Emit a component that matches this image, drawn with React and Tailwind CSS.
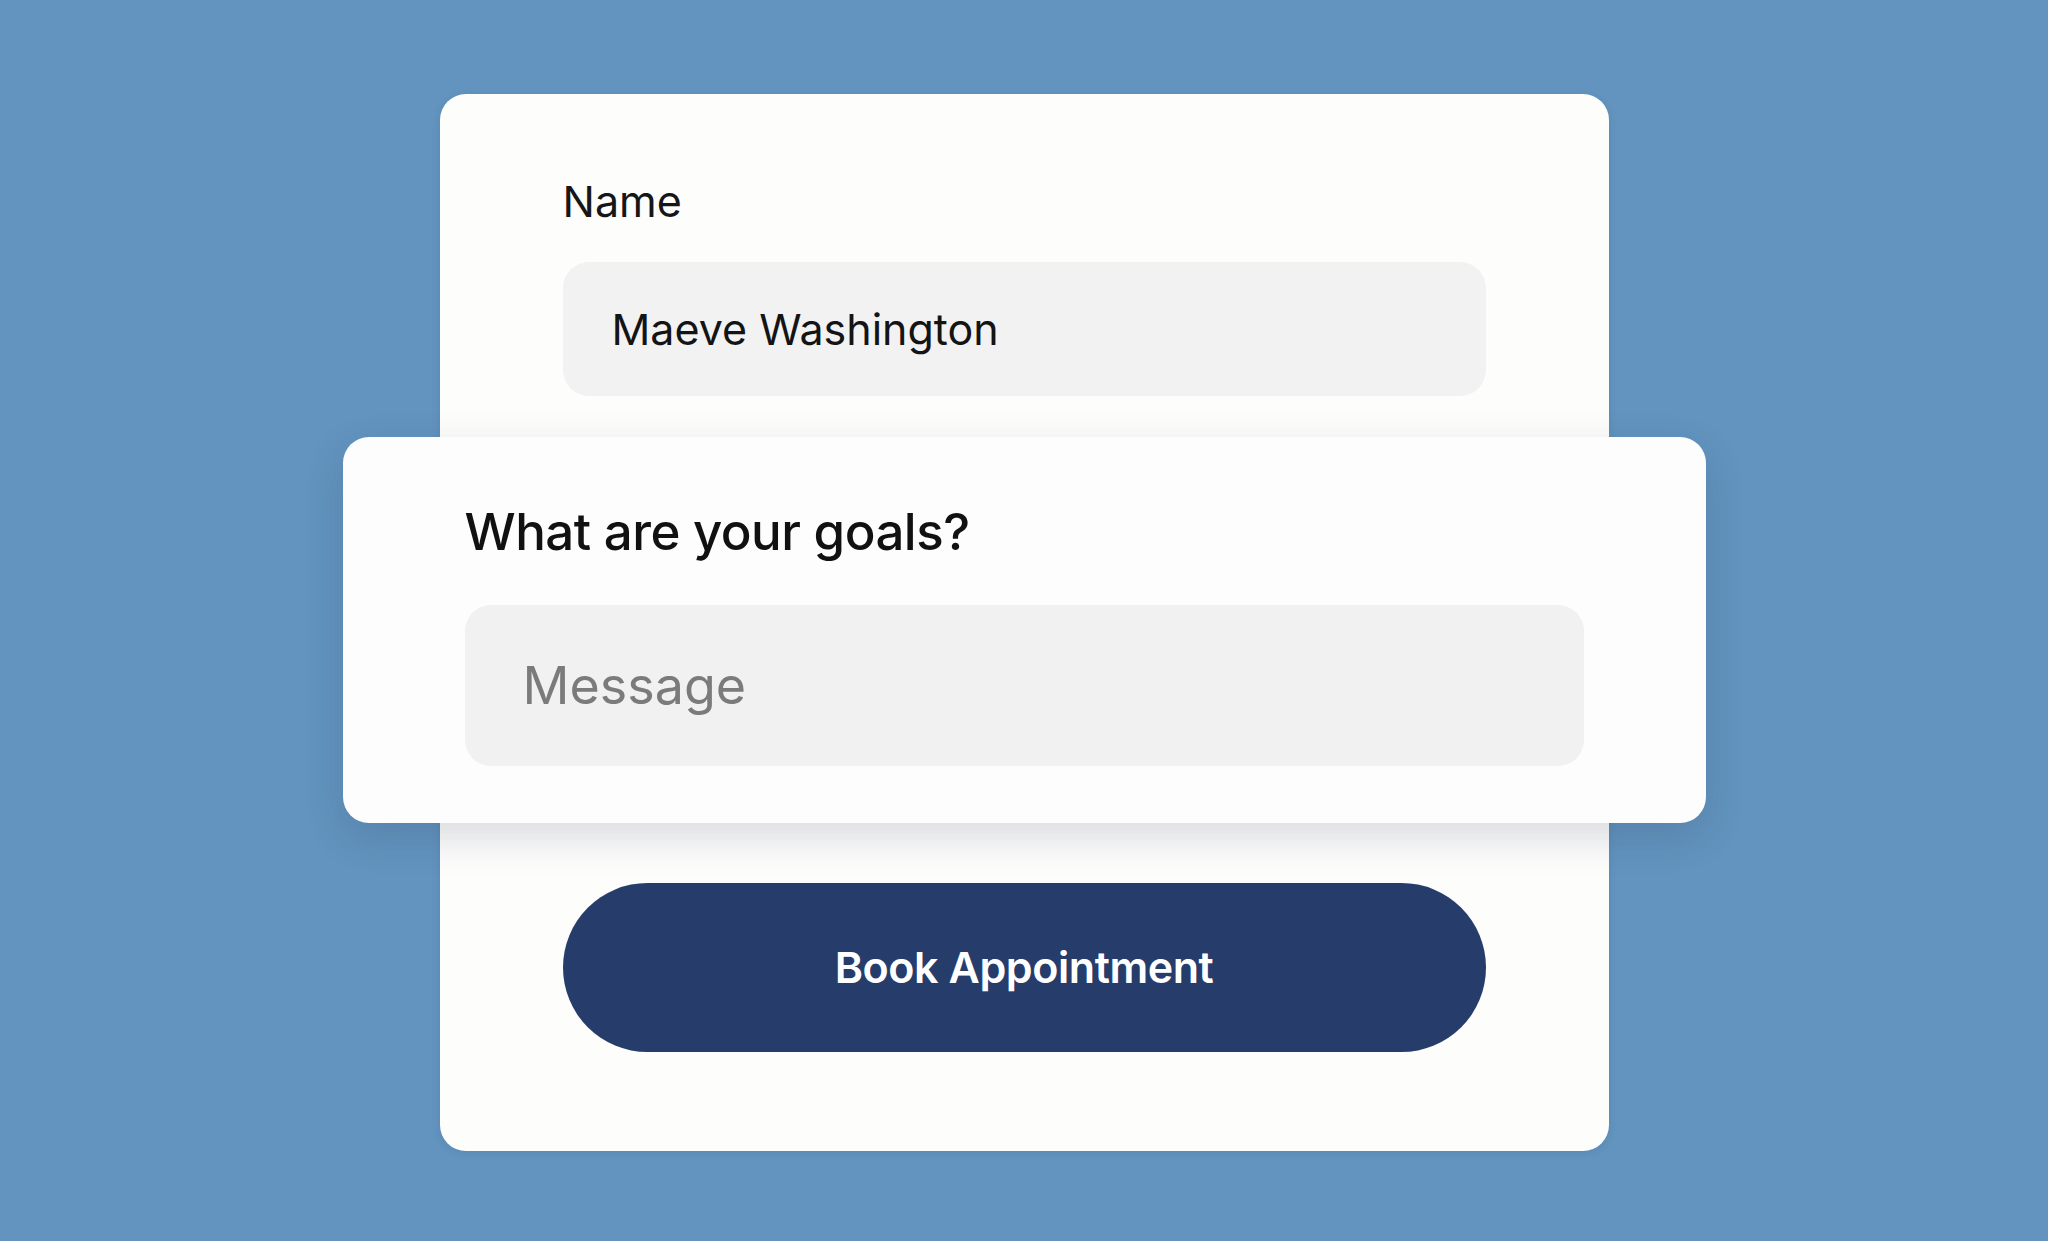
import React from 'react';

const BookingForm = () => {
  return (
    <div
      className="min-h-screen w-full bg-[#6294bf] flex justify-center pt-[94px] pb-[90px]"
      style={{ fontFamily: 'Inter, "Noto Sans", sans-serif' }}
    >
      <div className="w-[1169px] bg-[#fdfdfc] rounded-[26px] flex flex-col px-[123px] pt-[82px] pb-[96px] shadow-[0_2px_10px_rgba(0,0,0,0.08)]">
        <label className="text-[43px] leading-[50px] text-[#161616] font-normal">
          Name
        </label>
        <div className="mt-[36px] h-[134px] bg-[#f3f2f2] rounded-[26px] flex items-center pl-[49px]">
          <span className="text-[43px] text-[#141414] font-normal">Maeve Washington</span>
        </div>

        {/* overlapping card sticks out of the form on both sides */}
        <div className="mt-[41px] -mx-[220px] h-[386px] bg-[#fdfdfd] rounded-[26px] flex flex-col px-[122px] pt-[64px] pb-[55px] shadow-[0_14px_40px_rgba(30,40,60,0.16)]">
          <h2 className="text-[51px] leading-[62px] text-[#111] font-medium tracking-[-0.01em]">
            What are your goals?
          </h2>
          <div className="mt-[42px] h-[161px] bg-[#f2f1f1] rounded-[26px] flex items-center pl-[58px]">
            <span className="text-[52px] text-[#7b7b7b] font-normal">Message</span>
          </div>
        </div>

        <button className="mt-[60px] h-[169px] w-full rounded-full bg-[#263d6b] text-white text-[43px] font-semibold tracking-[-0.01em]">
          Book Appointment
        </button>
      </div>
    </div>
  );
};

export default function App() {
  return <BookingForm />;
}
